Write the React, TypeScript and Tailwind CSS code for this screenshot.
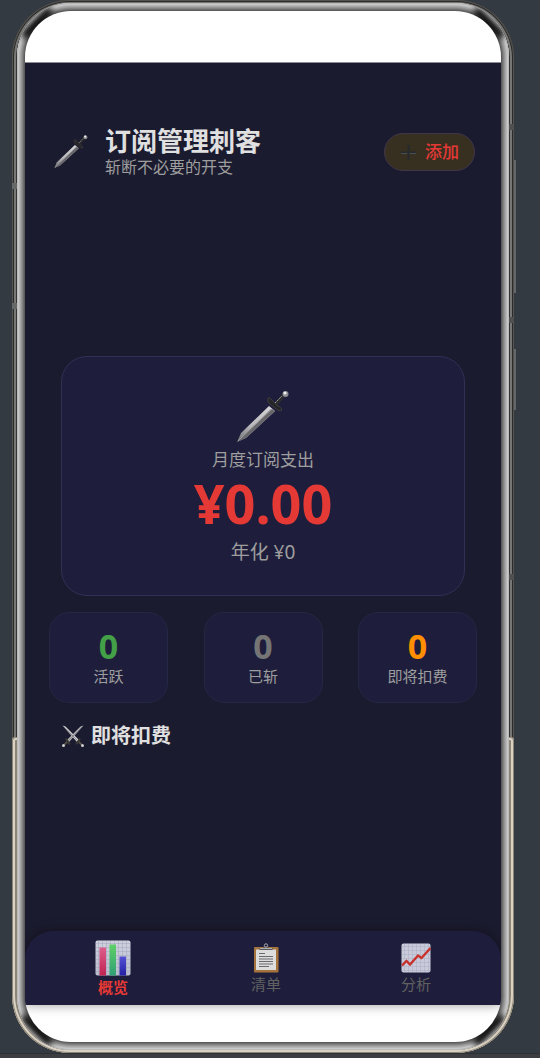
import React, { useState } from 'react';
import clsx from 'clsx';

type IconProps = { className?: string };

function SwordIcon({ className }: IconProps) {
  return (
    <svg viewBox="0 0 56 56" className={className} aria-hidden="true">
      <defs>
        <linearGradient id="blade" x1="0" y1="1" x2="1" y2="0">
          <stop offset="0" stopColor="#6c6c70" />
          <stop offset="0.4" stopColor="#b9b9bd" />
          <stop offset="1" stopColor="#dadadd" />
        </linearGradient>
      </defs>
      <path d="M2 53 L6 44 L34 17 L40 22 L11 49 Z" fill="url(#blade)" />
      <path d="M2 53 L37 20 L40 22 L11 49 Z" fill="#66666b" />
      <path d="M3 52 L36 20" stroke="#98989d" strokeWidth="1" />
      <path d="M39 17 L49 6" stroke="#2c2c2f" strokeWidth="4" />
      <path d="M40 14 L47 7" stroke="#a9a9ad" strokeWidth="1" strokeDasharray="2 1" />
      <path d="M33 9 Q35 8 37 11 Q40 16 45 18 Q48 20 46 22 Q43 22 40 19 Q36 16 33 13 Z" fill="#252527" stroke="#3d3d40" />
      <circle cx="50.500" cy="5" r="3" fill="#8e8e92" />
      <circle cx="50" cy="4" r="1.500" fill="#f2f2f2" />
    </svg>
  );
}

function CrossedSwordsIcon({ className }: IconProps) {
  return (
    <svg viewBox="0 0 24 24" className={className} aria-hidden="true">
      <path d="M1.500 1.500 L4.500 2.500 L18 16 L16 18 Z" fill="#d0d0d3" />
      <path d="M22.500 1.500 L19.500 2.500 L6 16 L8 18 Z" fill="#b4b4b8" />
      <path d="M2 2 L17 17 M22 2 L7 17" stroke="#77777c" strokeWidth="0.700" />
      <path d="M17 17 L21 21 M7 17 L3 21" stroke="#55504a" strokeWidth="1.800" />
      <path d="M15 20 Q17 19 19 14.500 M9 20 Q7 19 5 14.500" stroke="#3a3835" strokeWidth="2" fill="none" />
      <circle cx="21.500" cy="21.500" r="1.500" fill="#cfcfcf" />
      <circle cx="2.500" cy="21.500" r="1.500" fill="#cfcfcf" />
    </svg>
  );
}

function PlusIcon({ className }: IconProps) {
  return (
    <svg viewBox="0 0 17 17" className={className} aria-hidden="true">
      <path d="M7.500 1 H9.500 V7.500 H16 V9.500 H9.500 V16 H7.500 V9.500 H1 V7.500 H7.500 Z" fill="#242a2d" />
      <path d="M1 9.500 H7.500 M9.500 9.500 H16" stroke="#4b4f50" strokeWidth="1" />
    </svg>
  );
}

function BarChartIcon({ className }: IconProps) {
  return (
    <svg viewBox="0 0 36 36" className={className} aria-hidden="true">
      <defs>
        <linearGradient id="paper" x1="0" y1="0" x2="0" y2="1">
          <stop offset="0" stopColor="#cfd1df" />
          <stop offset="1" stopColor="#b9bdcd" />
        </linearGradient>
        <linearGradient id="barRed" x1="0" y1="0" x2="0" y2="1">
          <stop offset="0" stopColor="#dd5c8c" />
          <stop offset="1" stopColor="#c02452" />
        </linearGradient>
        <linearGradient id="barGreen" x1="0" y1="0" x2="0" y2="1">
          <stop offset="0" stopColor="#5fd068" />
          <stop offset="1" stopColor="#2f9f75" />
        </linearGradient>
        <linearGradient id="barBlue" x1="0" y1="0" x2="0" y2="1">
          <stop offset="0" stopColor="#5552d6" />
          <stop offset="1" stopColor="#2420a4" />
        </linearGradient>
      </defs>
      <rect x="0.500" y="0.500" width="35" height="35" rx="2" fill="url(#paper)" />
      <path
        d="M3.500 1V35M7.500 1V35M11.500 1V35M15.500 1V35M19.500 1V35M23.500 1V35M27.500 1V35M31.500 1V35M1 3.500H35M1 7.500H35M1 11.500H35M1 15.500H35M1 19.500H35M1 23.500H35M1 27.500H35M1 31.500H35"
        stroke="#a6abc0"
        strokeWidth="0.600"
      />
      <rect x="4.500" y="7.500" width="6.500" height="28" fill="url(#barRed)" />
      <rect x="14.500" y="4.500" width="6.500" height="31" fill="url(#barGreen)" />
      <rect x="24.500" y="16.500" width="6.500" height="19" fill="url(#barBlue)" />
    </svg>
  );
}

function ClipboardIcon({ className }: IconProps) {
  return (
    <svg viewBox="0 0 30 30" className={className} aria-hidden="true">
      <rect x="3" y="4" width="24.500" height="25.500" rx="1" fill="#a5743c" />
      <rect x="5" y="6.500" width="20" height="20.500" fill="#dcdcdc" />
      <path d="M8 10.500H14M8 13.500H22M8 16H22M8 18.500H22M8 21H22M8 23.500H18" stroke="#6a6a6e" strokeWidth="1" />
      <path d="M8.500 7 V5 H12.500 V3.500 H17.500 V5 H21.500 V7 Z" fill="#56565a" />
      <path d="M9 5.500H21" stroke="#c5c5c8" strokeWidth="0.800" />
      <circle cx="15" cy="2.500" r="1.700" fill="none" stroke="#a9a9ac" strokeWidth="1" />
    </svg>
  );
}

function TrendIcon({ className }: IconProps) {
  return (
    <svg viewBox="0 0 30 30" className={className} aria-hidden="true">
      <rect x="0.500" y="0.500" width="29" height="29" rx="2" fill="#c9cbda" />
      <path
        d="M3.500 1V29M7.500 1V29M11.500 1V29M15.500 1V29M19.500 1V29M23.500 1V29M27.500 1V29M1 3.500H29M1 7.500H29M1 11.500H29M1 15.500H29M1 19.500H29M1 23.500H29M1 27.500H29"
        stroke="#aeb2c6"
        strokeWidth="0.600"
      />
      <path d="M1 22.500 L5.500 18 L9 21.500 L17 12.500 L20.500 15 L29.500 5" fill="none" stroke="#c8322c" strokeWidth="2.400" />
    </svg>
  );
}

const stats = [
  { label: '活跃', value: 0, color: 'text-[#43a047]' },
  { label: '已斩', value: 0, color: 'text-[#757575]' },
  { label: '即将扣费', value: 0, color: 'text-[#ff8f00]' },
];

const tabs = [
  { id: 'overview', label: '概览', Icon: BarChartIcon },
  { id: 'list', label: '清单', Icon: ClipboardIcon },
  { id: 'analysis', label: '分析', Icon: TrendIcon },
];

export default function App() {
  const [tab, setTab] = useState('overview');
  const monthly = 0;

  return (
    <div className="flex min-h-screen flex-col bg-[#343a41] font-['Noto_Sans','Noto_Sans_CJK_SC',sans-serif]">
      {/* Phone body */}
      <div className="relative ml-3 mr-[26px] flex flex-1 flex-col rounded-[58px] bg-[#343434] px-[5px] py-[3px] shadow-[inset_0_0_0_1px_#55534f,inset_0_0_0_2px_#2b2b2b,inset_0_0_0_4px_#777875]">
        {/* Side buttons */}
        <div className="absolute -right-0.5 top-[160px] h-[133px] w-0.5 bg-[#64676a]" />
        <div className="absolute -right-0.5 top-[349px] h-[61px] w-0.5 bg-[#64676a]" />
        {/* Antenna bands */}
        <div className="absolute left-0 top-[183px] h-1.5 w-[5px] bg-[#666767]" />
        <div className="absolute left-0 top-[303px] h-1.5 w-[5px] bg-[#666767]" />
        <div className="absolute right-0 top-[124px] h-1.5 w-[5px] bg-[#4f5150]" />
        <div className="absolute right-0 top-[317px] h-1.5 w-[5px] bg-[#4f5150]" />
        <div className="absolute right-0 top-[574px] h-1.5 w-[5px] bg-[#4f5150]" />
        {/* Lower metal edge */}
        <div className="absolute inset-x-0 bottom-0 top-[737px] rounded-b-[58px] rounded-t-[4px] bg-[#8c8475] shadow-[inset_0_0_0_1px_#8c8475,inset_0_0_0_3px_#d9d2c4,inset_0_0_0_4px_#8c8475]" />

        <div className="relative flex flex-1 flex-col overflow-hidden rounded-[54px] bg-[#5c5c5c] p-2 shadow-[inset_0_0_0_1px_#b9b9b9,inset_0_0_0_2px_#c8c8c8,inset_0_0_0_3px_#b6b6b6,inset_0_0_0_4px_#a6a6a6,inset_0_0_0_5px_#959595,inset_0_0_0_6px_#828282,inset_0_0_0_7px_#6e6e6e]">
          {/* Dark reflections in the corners of the bezel */}
          <div className="absolute left-0 top-4 h-2 w-10 -rotate-45 rounded-full bg-black blur-[3px]" />
          <div className="absolute right-0 top-4 h-2 w-10 rotate-45 rounded-full bg-black blur-[3px]" />
          <div className="absolute bottom-4 left-0 h-2 w-10 rotate-45 rounded-full bg-black blur-[3px]" />
          <div className="absolute bottom-4 right-0 h-2 w-10 -rotate-45 rounded-full bg-black blur-[3px]" />

          <div className="relative flex flex-1 flex-col overflow-hidden rounded-[46px] bg-white">
            <div className="h-[52px] border-b border-[#8d8d96]" />

            <div className="flex flex-1 flex-col bg-[#1b1b2f]">
              <main className="flex-1 px-6">
                <header className="flex items-center justify-between pr-0.5 pt-[63px]">
                  <div className="flex items-center">
                    <SwordIcon className="ml-1 h-9 w-9" />
                    <div className="ml-4">
                      <h1 className="text-[26px] font-bold leading-[30px] text-[#e0e0e0]">订阅管理刺客</h1>
                      <p className="text-[16px] leading-[22px] text-[#9e9e9e]">斩断不必要的开支</p>
                    </div>
                  </div>
                  <button className="flex h-[38px] items-center gap-2 rounded-full border border-[#40364a] bg-[#373021] px-[15px] text-[17px] font-medium leading-6 text-[#e53935]">
                    <PlusIcon className="h-[17px] w-[17px]" />
                    添加
                  </button>
                </header>

                <section className="mx-3 mt-[178px] flex flex-col items-center rounded-[26px] border border-[#303055] bg-[#1e1e3c] pb-[29px] pt-8">
                  <SwordIcon className="h-14 w-14" />
                  <p className="mt-[3px] text-[17px] leading-6 text-[#9e9e9e]">月度订阅支出</p>
                  <p className="mt-0.5 text-[54px] font-bold leading-[58px] text-[#e53935]">¥{monthly.toFixed(2)}</p>
                  <p className="mt-1.5 text-[19px] leading-7 text-[#9e9e9e]">年化 ¥{monthly * 12}</p>
                </section>

                <section className="mt-4 flex justify-between">
                  {stats.map(s => (
                    <div
                      key={s.label}
                      className="flex w-[119px] flex-col items-center rounded-[20px] border border-[#232744] bg-[#1e1e3c] py-3.5"
                    >
                      <span className={clsx('text-[34px] font-bold leading-[38px]', s.color)}>{s.value}</span>
                      <span className="text-[15px] leading-[23px] text-[#9e9e9e]">{s.label}</span>
                    </div>
                  ))}
                </section>

                <h2 className="mx-3 mt-[19px] flex items-center gap-1.5 text-[20px] font-bold leading-7 text-[#e0e0e0]">
                  <CrossedSwordsIcon className="h-6 w-6" />
                  即将扣费
                </h2>
              </main>

              <nav className="flex h-[74px] items-center justify-around rounded-t-[28px] bg-[#1e1e3c] px-2.5 shadow-[0_0_12px_rgba(0,0,0,0.4)]">
                {tabs.map(({ id, label, Icon }) => (
                  <button
                    key={id}
                    onClick={() => setTab(id)}
                    className={clsx(
                      'flex flex-col items-center gap-px text-[15px] leading-5',
                      tab === id ? 'font-bold text-[#e53935]' : 'text-[#616161]'
                    )}
                  >
                    <Icon className={tab === id ? 'h-9 w-9' : 'h-[30px] w-[30px]'} />
                    {label}
                  </button>
                ))}
              </nav>
            </div>

            <div className="h-[37px]" />
          </div>
        </div>
      </div>

      <div className="h-[5px] border-t border-[#2e3033] bg-[#3b3d40]" />
    </div>
  );
}
